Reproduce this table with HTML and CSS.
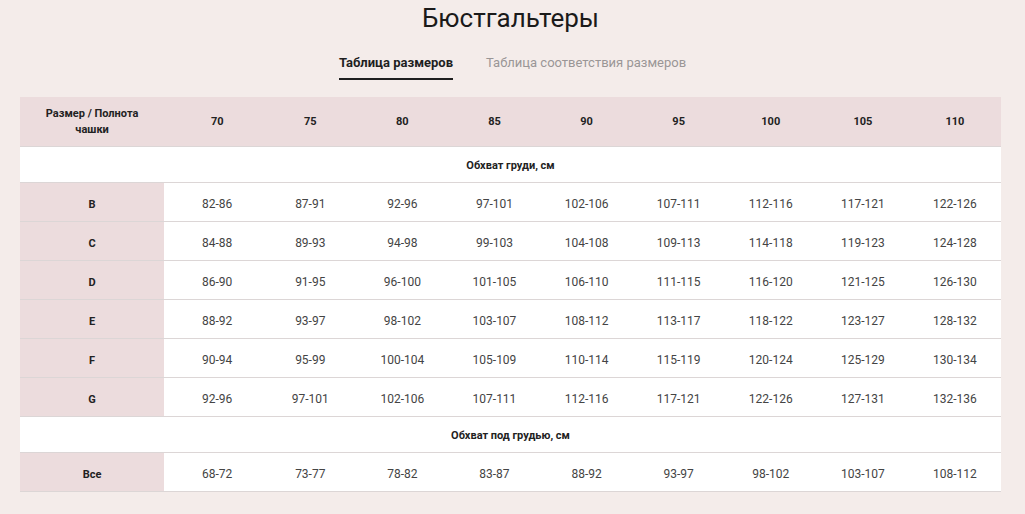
FILE: index.html
```html
<!DOCTYPE html>
<html lang="ru">
<head>
<meta charset="utf-8">
<link rel="stylesheet" href="styles.css">
</head>
<body>
<div class="page">
  <h1 class="title">Бюстгальтеры</h1>
  <div class="tabs">
    <span class="tab active">Таблица размеров</span>
    <span class="tab">Таблица соответствия размеров</span>
  </div>
  <table class="sizes">
    <colgroup>
      <col class="c-first"><col class="c-wide"><col class="c"><col class="c"><col class="c"><col class="c"><col class="c"><col class="c"><col class="c"><col class="c">
    </colgroup>
    <thead>
      <tr class="head"><th>Размер / Полнота<br>чашки</th><th class="first-data">70</th><th>75</th><th>80</th><th>85</th><th>90</th><th>95</th><th>100</th><th>105</th><th>110</th></tr>
    </thead>
    <tbody>
      <tr class="section"><td colspan="10">Обхват груди, см</td></tr>
      <tr><th>B</th><td>82-86</td><td>87-91</td><td>92-96</td><td>97-101</td><td>102-106</td><td>107-111</td><td>112-116</td><td>117-121</td><td>122-126</td></tr>
      <tr><th>C</th><td>84-88</td><td>89-93</td><td>94-98</td><td>99-103</td><td>104-108</td><td>109-113</td><td>114-118</td><td>119-123</td><td>124-128</td></tr>
      <tr><th>D</th><td>86-90</td><td>91-95</td><td>96-100</td><td>101-105</td><td>106-110</td><td>111-115</td><td>116-120</td><td>121-125</td><td>126-130</td></tr>
      <tr><th>E</th><td>88-92</td><td>93-97</td><td>98-102</td><td>103-107</td><td>108-112</td><td>113-117</td><td>118-122</td><td>123-127</td><td>128-132</td></tr>
      <tr><th>F</th><td>90-94</td><td>95-99</td><td>100-104</td><td>105-109</td><td>110-114</td><td>115-119</td><td>120-124</td><td>125-129</td><td>130-134</td></tr>
      <tr><th>G</th><td>92-96</td><td>97-101</td><td>102-106</td><td>107-111</td><td>112-116</td><td>117-121</td><td>122-126</td><td>127-131</td><td>132-136</td></tr>
      <tr class="section"><td colspan="10">Обхват под грудью, см</td></tr>
      <tr><th>Все</th><td>68-72</td><td>73-77</td><td>78-82</td><td>83-87</td><td>88-92</td><td>93-97</td><td>98-102</td><td>103-107</td><td>108-112</td></tr>
    </tbody>
  </table>
</div>
</body>
</html>
```

FILE: styles.css
```css
html, body {
  margin: 0;
  padding: 0;
  background: #f4ecea;
}
body {
  font-family: Roboto, "Liberation Sans", Arial, sans-serif;
  color: #222;
}
.page {
  padding: 0 24px 0 20px;
}
.title {
  margin: 0;
  padding-top: 3px;
  text-align: center;
  font-size: 26px;
  font-weight: 400;
  line-height: 30px;
  color: #1a1a1a;
}
.tabs {
  display: flex;
  justify-content: center;
  gap: 33px;
  margin-top: 22px;
  padding-left: 4px;
}
.tab {
  font-size: 13px;
  line-height: 16px;
  color: #9a9696;
  padding-bottom: 7px;
  border-bottom: 2px solid transparent;
}
.tab.active {
  color: #1f1f1f;
  font-weight: 700;
  border-bottom-color: #1f1f1f;
}
.sizes {
  margin-top: 17px;
  width: 981px;
  border-collapse: collapse;
  table-layout: fixed;
  font-size: 12px;
}
.c-first { width: 144px; }
.c-wide { width: 100px; }
.c { width: 92px; }
.sizes th, .sizes td {
  text-align: center;
  padding: 0;
  border-bottom: 1px solid #dcd6d6;
}
.sizes th {
  font-weight: 700;
  font-size: 11px;
  color: #222;
  background: #ecdcdd;
}
.sizes tbody th,
.sizes tbody td {
  padding-top: 4px;
}
.sizes td {
  background: #fff;
  color: #444;
  height: 34px;
}
.sizes td:nth-child(2),
.sizes .first-data {
  padding-left: 6px;
}
.head th {
  height: 49px;
  font-size: 11px;
  line-height: 16px;
}
.sizes .section td {
  height: 34px;
  padding-top: 1px;
  font-weight: 700;
  font-size: 11px;
  color: #222;
}
```
